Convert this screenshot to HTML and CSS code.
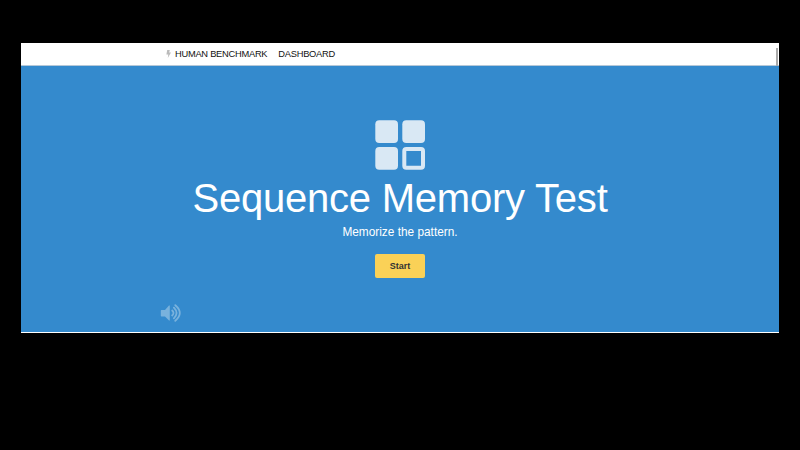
FILE: index.html
```html
<!DOCTYPE html>
<html lang="en">
<head>
<meta charset="utf-8">
<title>Sequence Memory Test</title>
<link rel="stylesheet" href="styles.css">
</head>
<body>
<div class="page">
  <nav class="nav">
    <svg class="bolt" viewBox="0 0 5 8"><path d="M1.200 0h2.600L3.200 2.500H5L1.800 8l.5-3.500H.4z"/></svg>
    <a class="brand">HUMAN BENCHMARK</a>
    <a>DASHBOARD</a>
  </nav>
  <main class="hero">
    <svg class="squares" viewBox="0 0 50 50">
      <rect x=".3" y=".3" width="22.700" height="22.700" rx="4"/>
      <rect x="27.300" y=".3" width="22.700" height="22.700" rx="4"/>
      <rect x=".3" y="27" width="22.700" height="22.700" rx="4"/>
      <path fill-rule="evenodd" d="M31.300 27h14.700a4 4 0 0 1 4 4v14.700a4 4 0 0 1-4 4H31.300a4 4 0 0 1-4-4V31a4 4 0 0 1 4-4zM31.300 31v14.700h14.700V31z"/>
    </svg>
    <h1>Sequence Memory Test</h1>
    <p>Memorize the pattern.</p>
    <button class="start">Start</button>
    <svg class="sound" viewBox="0 0 22 18">
      <path d="M1.500 6H5l4-4.500h.8v15H9L5 12.500H1.500q-.7 0-.7-.7V6.700q0-.7.700-.7z"/>
      <path class="wave" d="M12.200 6.500q2.600 2.500 0 5M13.900 3.700q5.300 5.300 0 10.600M15.300 1.200q9 7.800 0 15.600"/>
    </svg>
  </main>
  <div class="scroll"></div>
</div>
</body>
</html>
```
FILE: styles.css
```css
body {
  margin: 0;
  background: #000;
  font-family: "Liberation Sans", Arial, sans-serif;
}
.page {
  position: relative;
  width: 758px;
  height: 290px;
  margin: 43px 0 0 21px;
  background: #fff;
}
.nav {
  display: flex;
  align-items: center;
  box-sizing: border-box;
  height: 23px;
  padding: 0 0 1px 145px;
  border-bottom: 1px solid #b5c8d8;
  font-size: 9.300px;
  letter-spacing: -0.250px;
  color: #111;
}
.bolt { width: 5px; height: 8px; margin-right: 4px; fill: #bbb; }
.brand { margin-right: 11px; }
.hero {
  position: relative;
  display: flex;
  flex-direction: column;
  align-items: center;
  box-sizing: border-box;
  height: 266px;
  padding-top: 54px;
  background: #348acd;
  color: #fff;
}
.squares { width: 50px; height: 50px; fill: #d9e8f4; }
h1 {
  margin: 5px 0 0;
  font-size: 40px;
  line-height: 46px;
  font-weight: 400;
  letter-spacing: -0.220px;
  white-space: nowrap;
}
p { margin: 4px 0 0; font-size: 11.850px; line-height: 14px; }
.start {
  width: 50px;
  height: 24px;
  margin-top: 15px;
  padding: 0;
  border: 0;
  border-radius: 2px;
  background: #fad157;
  color: #333;
  font: bold 9px "Liberation Sans", Arial, sans-serif;
}
.sound { position: absolute; left: 139px; top: 238px; width: 22px; height: 18px; fill: #79b2dd; }
.wave { fill: none; stroke: #79b2dd; stroke-width: 1.800; stroke-linecap: round; }
.scroll { position: absolute; right: 1px; top: 5px; width: 2px; height: 18px; background: #aaa; }
```
